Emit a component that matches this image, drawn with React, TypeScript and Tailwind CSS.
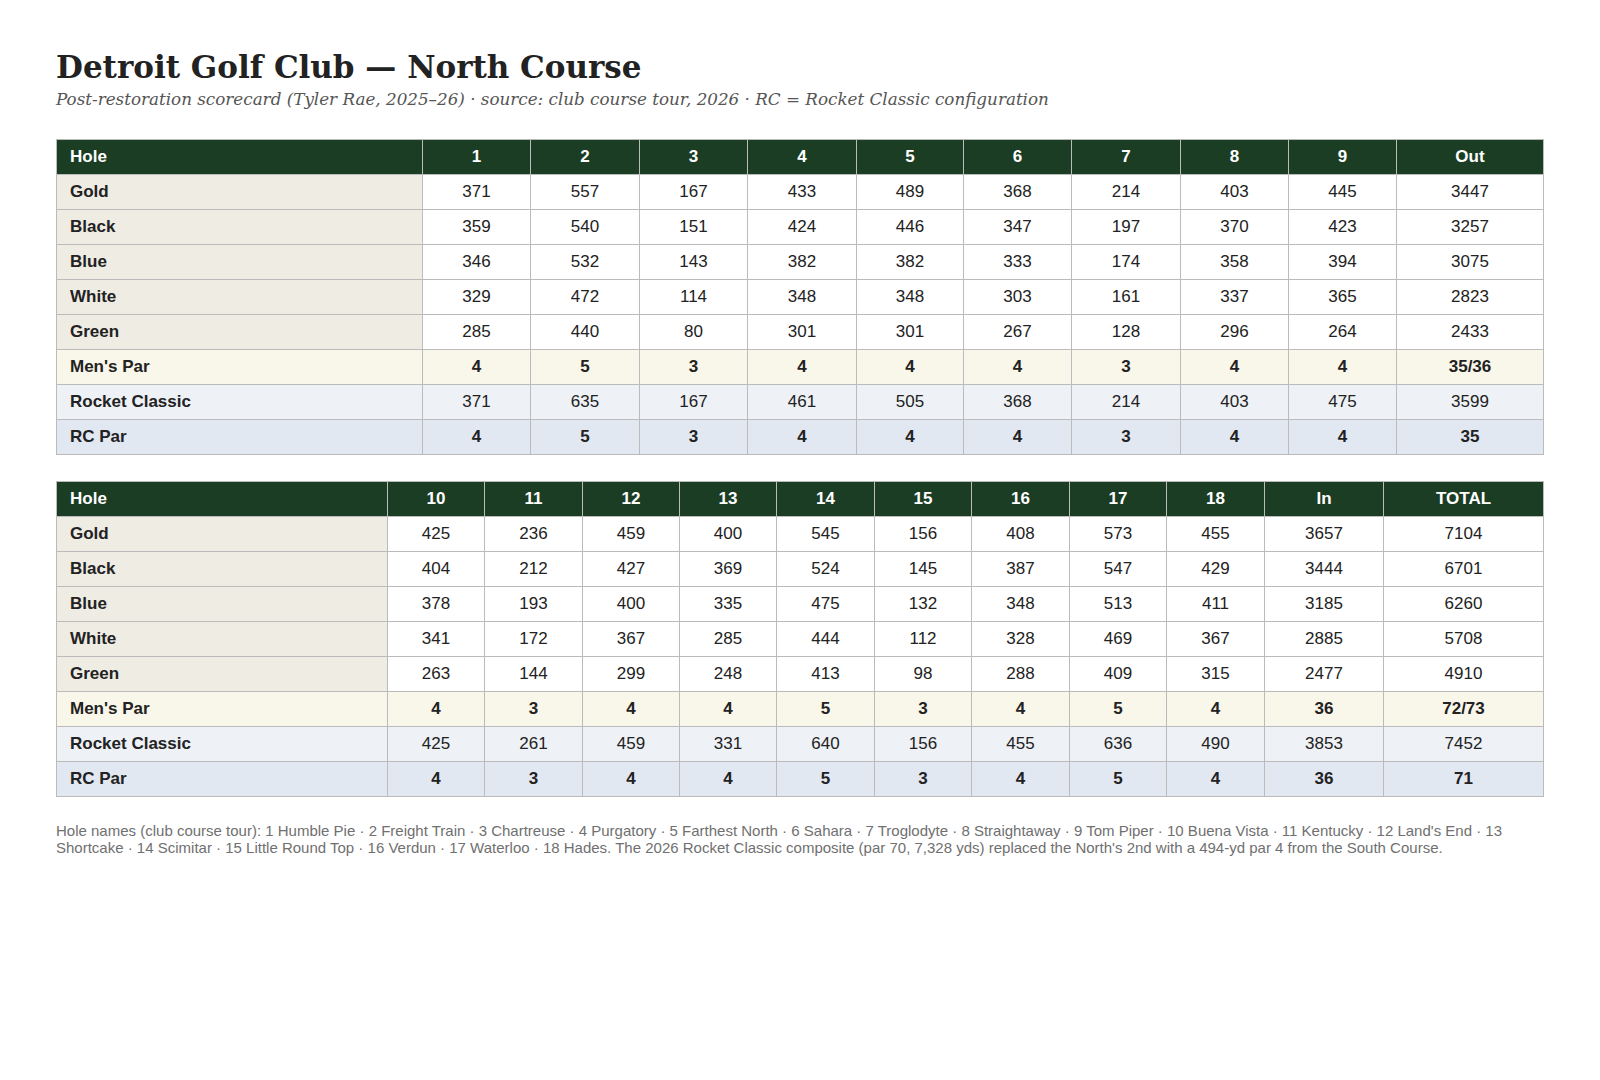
const front = {
  holes: ["1", "2", "3", "4", "5", "6", "7", "8", "9"],
  totals: ["Out"],
  widths: ["w-[366px]", "w-[108px]", "w-[109px]", "w-[108px]", "w-[109px]", "w-[107px]", "w-[108px]", "w-[109px]", "w-[108px]", "w-[108px]", ""],
  rows: [
    { label: "Gold", kind: "tee", values: ["371", "557", "167", "433", "489", "368", "214", "403", "445", "3447"] },
    { label: "Black", kind: "tee", values: ["359", "540", "151", "424", "446", "347", "197", "370", "423", "3257"] },
    { label: "Blue", kind: "tee", values: ["346", "532", "143", "382", "382", "333", "174", "358", "394", "3075"] },
    { label: "White", kind: "tee", values: ["329", "472", "114", "348", "348", "303", "161", "337", "365", "2823"] },
    { label: "Green", kind: "tee", values: ["285", "440", "80", "301", "301", "267", "128", "296", "264", "2433"] },
    { label: "Men's Par", kind: "par", values: ["4", "5", "3", "4", "4", "4", "3", "4", "4", "35/36"] },
    { label: "Rocket Classic", kind: "rc", values: ["371", "635", "167", "461", "505", "368", "214", "403", "475", "3599"] },
    { label: "RC Par", kind: "rcpar", values: ["4", "5", "3", "4", "4", "4", "3", "4", "4", "35"] },
  ],
};

const back = {
  holes: ["10", "11", "12", "13", "14", "15", "16", "17", "18"],
  totals: ["In", "TOTAL"],
  widths: ["w-[331px]", "w-[97px]", "w-[98px]", "w-[97px]", "w-[97px]", "w-[98px]", "w-[97px]", "w-[98px]", "w-[97px]", "w-[98px]", "w-[119px]", ""],
  rows: [
    { label: "Gold", kind: "tee", values: ["425", "236", "459", "400", "545", "156", "408", "573", "455", "3657", "7104"] },
    { label: "Black", kind: "tee", values: ["404", "212", "427", "369", "524", "145", "387", "547", "429", "3444", "6701"] },
    { label: "Blue", kind: "tee", values: ["378", "193", "400", "335", "475", "132", "348", "513", "411", "3185", "6260"] },
    { label: "White", kind: "tee", values: ["341", "172", "367", "285", "444", "112", "328", "469", "367", "2885", "5708"] },
    { label: "Green", kind: "tee", values: ["263", "144", "299", "248", "413", "98", "288", "409", "315", "2477", "4910"] },
    { label: "Men's Par", kind: "par", values: ["4", "3", "4", "4", "5", "3", "4", "5", "4", "36", "72/73"] },
    { label: "Rocket Classic", kind: "rc", values: ["425", "261", "459", "331", "640", "156", "455", "636", "490", "3853", "7452"] },
    { label: "RC Par", kind: "rcpar", values: ["4", "3", "4", "4", "5", "3", "4", "5", "4", "36", "71"] },
  ],
};

type Kind = "tee" | "par" | "rc" | "rcpar";

const rowBg: Record<Kind, string> = {
  tee: "bg-white",
  par: "bg-[#f9f6ea]",
  rc: "bg-[#eef1f6]",
  rcpar: "bg-[#e2e8f2]",
};

const labelBg: Record<Kind, string> = {
  tee: "bg-[#efece4]",
  par: "bg-[#f9f6ea]",
  rc: "bg-[#eef1f6]",
  rcpar: "bg-[#e2e8f2]",
};

function Scorecard({ data }: { data: typeof front }) {
  return (
    <table className="w-full table-fixed border-collapse text-[17px] text-[#222]">
      <colgroup>
        {data.widths.map((w, i) => (
          <col key={i} className={w} />
        ))}
      </colgroup>
      <thead>
        <tr className="h-[35px] bg-[#1b3d24] text-white">
          <th className="border border-[#bbb] pl-[13px] text-left font-bold">Hole</th>
          {[...data.holes, ...data.totals].map((h) => (
            <th key={h} className="border border-[#bbb] text-center font-bold">
              {h}
            </th>
          ))}
        </tr>
      </thead>
      <tbody>
        {data.rows.map((r) => {
          const kind = r.kind as Kind;
          const bold = kind === "par" || kind === "rcpar";
          return (
            <tr key={r.label} className={`h-[35px] ${rowBg[kind]}`}>
              <td className={`border border-[#bbb] pl-[13px] font-bold ${labelBg[kind]}`}>{r.label}</td>
              {r.values.map((v, i) => (
                <td key={i} className={`border border-[#bbb] text-center ${bold ? "font-bold" : ""}`}>
                  {v}
                </td>
              ))}
            </tr>
          );
        })}
      </tbody>
    </table>
  );
}

export default function App() {
  return (
    <div className="min-h-[1080px] bg-white px-[56px] pt-[47px] font-['Liberation_Sans',Arial,sans-serif]">
      <h1 className="font-['Georgia','DejaVu_Serif',serif] text-[31px] font-bold leading-[40px] text-[#222]">
        Detroit Golf Club — North Course
      </h1>
      <p className="font-['Georgia','DejaVu_Serif',serif] text-[16.75px] italic leading-[24px] text-[#555]">
        Post-restoration scorecard (Tyler Rae, 2025–26) · source: club course tour, 2026 · RC = Rocket Classic configuration
      </p>

      <div className="mt-[28px]">
        <Scorecard data={front} />
      </div>
      <div className="mt-[26px]">
        <Scorecard data={back} />
      </div>

      <p className="mt-[25px] text-[15px] leading-[17px] text-[#707070]">
        Hole names (club course tour): 1 Humble Pie · 2 Freight Train · 3 Chartreuse · 4 Purgatory · 5 Farthest North · 6 Sahara · 7 Troglodyte · 8 Straightaway · 9 Tom Piper · 10 Buena Vista · 11 Kentucky · 12 Land's End · 13 Shortcake · 14 Scimitar · 15 Little Round Top · 16 Verdun · 17 Waterloo · 18 Hades. The 2026 Rocket Classic composite (par 70, 7,328 yds) replaced the North's 2nd with a 494-yd par 4 from the South Course.
      </p>
    </div>
  );
}
